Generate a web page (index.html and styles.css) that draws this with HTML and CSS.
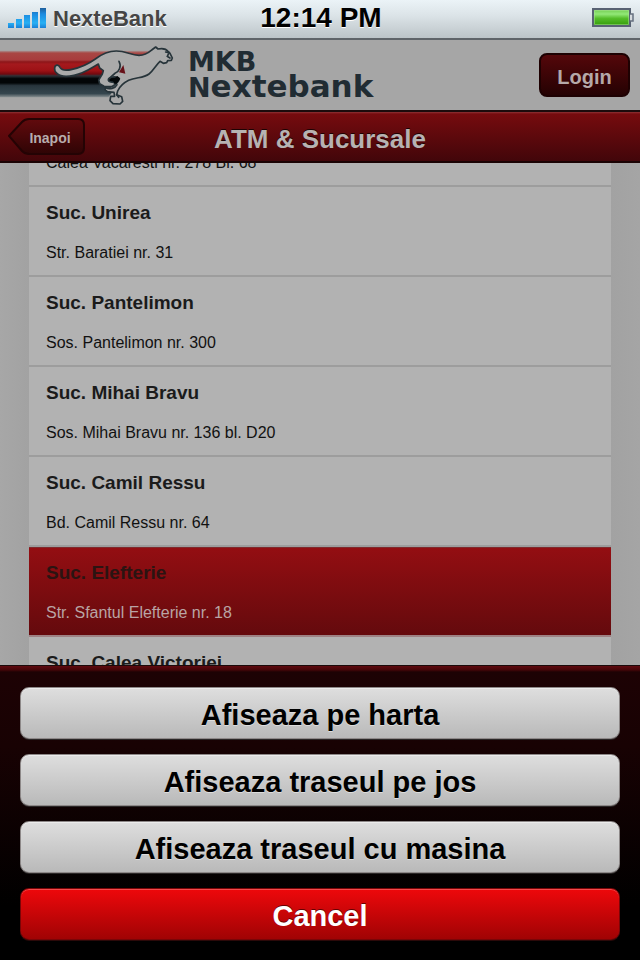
FILE: index.html
```html
<!DOCTYPE html>
<html lang="ro">
<head>
<meta charset="utf-8">
<meta name="viewport" content="width=device-width, initial-scale=1">
<title>ATM &amp; Sucursale</title>
<link rel="stylesheet" href="styles.css">
</head>
<body>
<div class="status">
  <div class="carrier">
    <svg class="signal" viewBox="0 0 38 20" aria-hidden="true">
      <defs><linearGradient id="bars" x1="0" y1="0" x2="0" y2="20" gradientUnits="userSpaceOnUse"><stop offset="0" stop-color="#1d5f9c"/><stop offset=".3" stop-color="#1c8be0"/><stop offset=".75" stop-color="#27b0f4"/><stop offset="1" stop-color="#1a7fd6"/></linearGradient></defs>
      <path fill="url(#bars)" d="M0 15h6v5H0zM8 11h6v9H8zM16 7h6v13h-6zM24 4h6v16h-6zM32 0h6v20h-6z"/>
    </svg>
    <span>NexteBank</span>
  </div>
  <time class="clock">12:14 PM</time>
  <svg class="battery" viewBox="0 0 42 20" aria-hidden="true">
    <defs><linearGradient id="charge" x1="0" y1="0" x2="0" y2="1"><stop offset="0" stop-color="#6fc94c"/><stop offset=".3" stop-color="#92e878"/><stop offset=".55" stop-color="#55bd2a"/><stop offset="1" stop-color="#309806"/></linearGradient></defs>
    <rect x="1" y="1" width="37" height="17" fill="url(#charge)" stroke="#586273" stroke-width="2"/>
    <path d="M2.500 2.500h34v14h-34z" fill="none" stroke="#ace49a" stroke-opacity=".5"/>
    <path d="M38 6h3v7h-3" fill="#d5dade" stroke="#667080" stroke-width="1.500"/>
  </svg>
</div>
<header class="brand">
  <div class="logo">
    <svg class="cheetah" viewBox="0 120 540 210" aria-hidden="true">
      <defs>
        <linearGradient id="stripes" x1="0" y1="152" x2="0" y2="292" gradientUnits="userSpaceOnUse">
          <stop offset="0" stop-color="#a69796"/><stop offset=".05" stop-color="#a94744"/><stop offset=".2" stop-color="#a83c3d"/><stop offset=".24" stop-color="#8d1619"/><stop offset=".29" stop-color="#a5191d"/><stop offset=".43" stop-color="#9c1115"/><stop offset=".5" stop-color="#73090f"/><stop offset=".54" stop-color="#2d3238"/><stop offset=".6" stop-color="#020507"/><stop offset=".69" stop-color="#020507"/><stop offset=".75" stop-color="#28353d"/><stop offset=".92" stop-color="#35464e"/><stop offset="1" stop-color="#899193"/>
        </linearGradient>
      </defs>
      <path fill="url(#stripes)" d="M0 152H450L425 170 372 222 350 260 325 292H0Z"/>
      <path fill="#aaa" stroke="#27343a" stroke-width="5" stroke-linejoin="round" d="M164 205C164 193 176 192 180 202C186 212 200 212 216 208C244 202 264 193 286 177C308 160 326 153 349 153C379 153 392 166 417 166C440 166 449 155 459 147L467 141L474 147C487 144 499 147 505 155L510 160L517 174L514 181L503 182L500 188L490 190L480 184C467 196 462 210 447 222C430 235 408 231 386 241C368 250 359 260 353 273L350 284L365 290L368 304L360 312L339 311L330 302L332 289L344 289L342 277L322 275L315 269L318 262L331 262C345 255 361 242 356 234C347 229 330 230 326 236C322 245 331 246 341 247L346 253L337 260L312 259L299 251L296 240L307 222L310 212L299 204L295 192C277 202 254 220 222 226C199 231 180 229 171 220C165 215 163 211 164 205Z"/>
      <path fill="#681018" d="M370 195L357 217L376 221Z"/>
      <path fill="none" stroke="#27343a" stroke-width="5" stroke-linecap="round" d="M357 184C365 198 358 215 345 220L327 236M317 263C328 270 346 265 351 254M497 156L507 158L502 169L510 174M350 284L356 292"/>
      <path fill="#04080a" d="M337 240L352 228 361 236 350 251 344 251Z"/>
    </svg>
    <div class="wordmark"><span class="mkb">MKB</span><span class="name"><span class="initial">N</span>extebank</span></div>
  </div>
  <button class="login" type="button">Login</button>
</header>
<nav class="bar">
  <button class="back" type="button">
    <svg class="back-shape" viewBox="0 0 78 38" aria-hidden="true">
      <defs><linearGradient id="back" x1="0" y1="0" x2="0" y2="1"><stop offset="0" stop-color="#620a0d"/><stop offset="1" stop-color="#2e0405"/></linearGradient></defs>
      <path d="M1 18L14 4Q17 1 21 1H70Q76 1 76 7V30Q76 36 70 36H21Q17 36 14 33Z" fill="url(#back)" stroke="#240304" stroke-width="2"/>
    </svg>
    <span class="back-label">Inapoi</span>
  </button>
  <h1>ATM &amp; Sucursale</h1>
</nav>
<main class="content">
  <ul class="branches">
    <li><a class="branch branch-cut" href="#"><span class="address">Calea Vacaresti nr. 278 Bl. 68</span></a></li>
    <li><a class="branch" href="#"><strong>Suc. Unirea</strong><span class="address">Str. Baratiei nr. 31</span></a></li>
    <li><a class="branch" href="#"><strong>Suc. Pantelimon</strong><span class="address">Sos. Pantelimon nr. 300</span></a></li>
    <li><a class="branch" href="#"><strong>Suc. Mihai Bravu</strong><span class="address">Sos. Mihai Bravu nr. 136 bl. D20</span></a></li>
    <li><a class="branch" href="#"><strong>Suc. Camil Ressu</strong><span class="address">Bd. Camil Ressu nr. 64</span></a></li>
    <li><a class="branch selected" href="#"><strong>Suc. Elefterie</strong><span class="address">Str. Sfantul Elefterie nr. 18</span></a></li>
    <li><a class="branch" href="#"><strong>Suc. Calea Victoriei</strong></a></li>
  </ul>
</main>
<div class="sheet">
  <button class="action" type="button">Afiseaza pe harta</button>
  <button class="action" type="button">Afiseaza traseul pe jos</button>
  <button class="action" type="button">Afiseaza traseul cu masina</button>
  <button class="action cancel" type="button">Cancel</button>
</div>
</body>
</html>
```
FILE: styles.css
```css
* { box-sizing: border-box; }

body {
  margin: 0;
  height: 100vh;
  display: flex;
  flex-direction: column;
  background: #a5a5a5;
  font-family: "Liberation Sans", Arial, sans-serif;
}

button { font-family: inherit; font-weight: bold; cursor: pointer; }

.status {
  flex: none;
  height: 40px;
  display: grid;
  grid-template-columns: 1fr auto 1fr;
  align-items: center;
  padding: 0 6px 3px 8px;
  background: linear-gradient(#ebf3f7, #dce4e8 40%, #bcc4c8);
  border-bottom: 2px solid #5f6469;
}
.carrier {
  display: flex;
  align-items: center;
  gap: 7px;
  color: #454545;
  font-size: 22px;
  line-height: 24px;
  font-weight: bold;
  text-shadow: 0 1px 0 #fff;
}
.carrier span { padding-top: 3px; }
.signal { width: 38px; height: 20px; }
.clock { padding-top: 1px; color: #000; font-size: 28px; font-weight: bold; line-height: 32px; text-shadow: 0 1px 0 #fff; }
.battery { width: 42px; height: 20px; justify-self: end; }

.brand {
  flex: none;
  height: 70px;
  display: flex;
  align-items: center;
  justify-content: space-between;
  padding-right: 10px;
  background: #a6a6a6;
}
.logo { display: flex; gap: 8px; }
.cheetah { width: 180px; height: 70px; }
.wordmark {
  display: flex;
  flex-direction: column;
  padding-top: 10px;
  color: #212c33;
  font-family: "DejaVu Sans", sans-serif;
  font-weight: bold;
}
.mkb { font-size: 27px; line-height: 24px; }
.name { font-size: 31px; line-height: 24px; }
.initial { font-size: 27px; }
.login {
  width: 91px;
  height: 44px;
  padding: 4px 0 0;
  border: 2px solid #1e0102;
  border-radius: 8px;
  background: linear-gradient(#54070a, #250203);
  color: #b5a9a9;
  font-size: 20px;
}

.bar {
  flex: none;
  height: 53px;
  display: grid;
  grid-template-columns: 1fr auto 1fr;
  align-items: center;
  padding: 0 8px;
  border-top: 2px solid #1c0b0c;
  border-bottom: 2px solid #1b0304;
  background: linear-gradient(#8e3335, #760b0e 2px, #42060a);
}
.bar h1 {
  margin: 0;
  color: #b7b2b2;
  font-size: 26px;
  line-height: 30px;
  padding-top: 4px;
  text-shadow: 0 -1px 0 #1d0203;
}
.back {
  position: relative;
  width: 78px;
  height: 38px;
  padding: 2px 0 0 6px;
  border: 0;
  background: none;
  color: #b7adad;
  font-size: 14px;
}
.back-shape { position: absolute; inset: 0; width: 100%; height: 100%; }
.back-label { position: relative; }

.content {
  flex: 1;
  min-height: 0;
  display: flex;
  flex-direction: column;
  overflow: hidden;
  padding: 0 29px;
  background: linear-gradient(90deg, #a7a7a7, #a2a2a2 29px, #a2a2a2 calc(100% - 29px), #a5a5a5);
}
.branches {
  margin: -10px 0 0;
  padding: 0;
  list-style: none;
  background: #b2b2b2;
}
.branch {
  display: flex;
  flex-direction: column;
  gap: 19px;
  padding: 15px 17px 12px;
  border-bottom: 2px solid #9d9d9d;
  color: #1b1b1b;
  text-decoration: none;
}
.branch-cut { padding-top: 0; }
.branch strong { font-size: 19px; line-height: 22px; }
.address { color: #111; font-size: 16px; line-height: 20px; }
.selected {
  border-color: #9d8284;
  box-shadow: inset 0 1px 0 #7f2a2e;
  background: linear-gradient(#940e12, #640a0d) padding-box;
}
.selected strong { color: #2b1412; }
.selected .address { color: #b9a4a4; }

.sheet {
  flex: none;
  display: flex;
  flex-direction: column;
  gap: 15px;
  padding: 21px 20px 20px;
  border-top: 1px solid #1b0a0a;
  background: linear-gradient(#60090f, #430508 4px, #1d0204 6px, #180203 80px, #000 240px);
}
.action {
  height: 52px;
  padding: 4px 0 0;
  border: 1px solid #8d8888;
  border-radius: 9px;
  background: linear-gradient(#dedede, #b9b9b9);
  box-shadow: inset 0 1px 0 #ececec, 0 1px 0 #2b2727;
  color: #000;
  font-size: 29px;
  line-height: 34px;
  text-shadow: 0 1px 0 #ddd;
}
.cancel {
  border-color: #7b0507;
  background: linear-gradient(#ee080b, #a00304);
  box-shadow: inset 0 1px 0 #f34a4c, 0 1px 0 #2b0909;
  color: #fff;
  text-shadow: 0 -1px 0 #640203;
}
```
